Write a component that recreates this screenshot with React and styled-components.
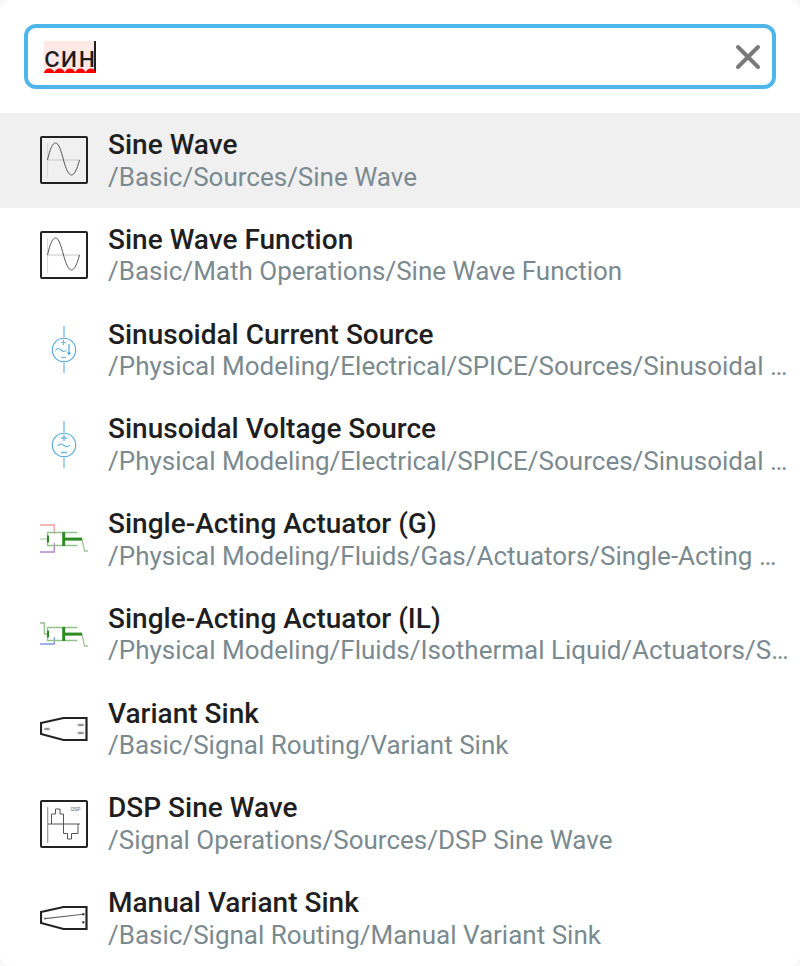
import React from "react";
import styled, { createGlobalStyle } from "styled-components";

const Global = createGlobalStyle`
  html, body { margin: 0; padding: 0; background: #f8f8f8; }
  body { font-family: Roboto, "Liberation Sans", sans-serif; }
`;

const Panel = styled.div`
  width: 800px;
  height: 966px;
  overflow: hidden;
  background: #fff;
  border-radius: 12px;
`;
const SearchArea = styled.div`
  padding: 24px 24px 24px;
`;
const SearchBox = styled.div`
  box-sizing: border-box;
  height: 65px;
  border: 4px solid #4fb6ea;
  border-radius: 12px;
  display: flex;
  align-items: center;
  justify-content: space-between;
  padding: 0 9px 0 16px;
`;
const Query = styled.span`
  position: relative;
  display: block;
  height: 32px;
  width: 50px;
  background: #ffe9e7;
  border-right: 2px solid #222;
  font-size: 30px;
  line-height: 31px;
  letter-spacing: 0.6px;
  color: #1d1d1f;
`;
const Squiggle = styled.svg`
  position: absolute;
  left: 0;
  bottom: 0;
  display: block;
`;
const ClearButton = styled.button`
  border: 0;
  padding: 0;
  background: none;
  display: flex;
  width: 30px;
  height: 30px;
`;
const List = styled.div`
  display: flex;
  flex-direction: column;
`;
const Row = styled.div`
  box-sizing: border-box;
  height: 94.75px;
  flex: none;
  display: flex;
  align-items: center;
  gap: 20px;
  padding: 0 11px 0 40px;
  background: ${(p) => (p.$active ? "#f0f0f0" : "transparent")};
`;
const IconSlot = styled.svg`
  width: 48px;
  height: 48px;
  flex: none;
  display: block;
`;
const Texts = styled.div`
  min-width: 0;
  flex: 1;
  padding-top: 1px;
`;
const Title = styled.div`
  font-size: 28px;
  line-height: 31.5px;
  font-weight: 500;
  color: #1f1f21;
  white-space: nowrap;
`;
const Path = styled.div`
  font-size: 26px;
  line-height: 32px;
  font-weight: 400;
  color: #7b8a8f;
  white-space: nowrap;
  overflow: hidden;
  text-overflow: ellipsis;
`;

const Box = () => (
  <rect x="1" y="1" width="46" height="46" rx="1" fill="none" stroke="#222" strokeWidth="2" />
);

const SinePlot = () => (
  <>
    <path d="M7.5 7V42" stroke="#dcdcdc" strokeWidth="1.2" fill="none" />
    <path d="M7.5 24H40" stroke="#c8c8c8" strokeWidth="1" fill="none" />
    <path
      d="M7.5 24C10 13 12.5 7 15.5 7C19 7 21 15 23.5 24C26 33 28.5 39 31.5 39C34.5 39 37 33 39.5 24"
      stroke="#555"
      strokeWidth="1"
      fill="none"
    />
  </>
);

const SineIcon = () => (
  <IconSlot viewBox="0 0 48 48">
    <Box />
    <SinePlot />
  </IconSlot>
);

const SourceBase = ({ children }) => (
  <IconSlot viewBox="0 0 48 48">
    <path d="M24 0V11.5M24 36.5V47" stroke="#9ccfec" strokeWidth="1.8" fill="none" />
    <circle cx="24" cy="24" r="11.7" fill="none" stroke="#4fa8dc" strokeWidth="1.1" />
    {children}
  </IconSlot>
);

const CurrentIcon = () => (
  <SourceBase>
    <path d="M21 16.5H26M23.5 14V19M21 31.5H26" stroke="#6db8e2" strokeWidth="1.2" fill="none" />
    <path d="M15.5 24.5C17 22 19 22 21 24C23 26 25 26 26.5 24" stroke="#5fb0df" strokeWidth="1.1" fill="none" />
    <path d="M29 18V28" stroke="#3f9fd8" strokeWidth="1.1" fill="none" />
    <path d="M27 26.5H31L29 29.5Z" fill="#3f9fd8" />
  </SourceBase>
);

const VoltageIcon = () => (
  <SourceBase>
    <path d="M21 17H27M24 14V20M21 31.5H27" stroke="#6db8e2" strokeWidth="1.4" fill="none" />
    <path d="M18 25C19.5 22.5 21.5 22.5 24 24.5C26.5 26.5 28.5 26 30 24" stroke="#5fb0df" strokeWidth="1.1" fill="none" />
  </SourceBase>
);

const ActuatorBody = () => (
  <>
    <path d="M37.5 17.5H7.5V30.5H37.5" stroke="#94c28a" strokeWidth="1.3" fill="none" />
    <path d="M42 24L44.5 36H49" stroke="#a2c49b" strokeWidth="1.3" fill="none" />
    <rect x="7" y="20.5" width="2" height="7" fill="#2f8a25" />
    <rect x="22.2" y="17" width="3" height="14" fill="#2f8a25" />
    <rect x="25" y="22.6" width="17" height="3" fill="#2f8a25" />
  </>
);

const GasActuatorIcon = () => (
  <IconSlot viewBox="0 0 48 48">
    <path d="M0 10H14.3V19" stroke="#f3a0a0" strokeWidth="1.3" fill="none" />
    <path d="M0 37H14.3V28" stroke="#b587cb" strokeWidth="1.3" fill="none" />
    <path d="M0 24H7" stroke="#c5dcc0" strokeWidth="1.6" fill="none" />
    <ActuatorBody />
  </IconSlot>
);

const LiquidActuatorIcon = () => (
  <IconSlot viewBox="0 0 48 48">
    <path d="M0 13H4.3V24H7" stroke="#94c28a" strokeWidth="1.3" fill="none" />
    <path d="M0 34H14.3V27" stroke="#8096ea" strokeWidth="1.3" fill="none" />
    <ActuatorBody />
  </IconSlot>
);

const SinkOutline = () => (
  <path d="M1 18L23.5 13H46.5V35H23.5L1 29Z" fill="none" stroke="#222" strokeWidth="2.2" />
);

const SinkIcon = () => (
  <IconSlot viewBox="0 0 48 48">
    <SinkOutline />
    <path d="M4 24H10M37.5 20H44M37.5 28H44" stroke="#b0b0b0" strokeWidth="2.6" fill="none" />
    <path d="M5.5 24H8.5M39 20H42.5M39 28H42.5" stroke="#666" strokeWidth="0.8" fill="none" />
  </IconSlot>
);

const ManualSinkIcon = () => (
  <IconSlot viewBox="0 0 48 48">
    <SinkOutline />
    <path d="M5 24.6L43 20.3" stroke="#666" strokeWidth="1.1" fill="none" />
    <circle cx="5" cy="24.6" r="1" fill="#666" />
    <circle cx="43.3" cy="20.3" r="1.2" fill="#444" />
    <circle cx="43.3" cy="28.3" r="1.2" fill="#444" />
  </IconSlot>
);

const DspIcon = () => (
  <IconSlot viewBox="0 0 48 48">
    <Box />
    <path d="M7.7 7V43" stroke="#999" strokeWidth="1.2" fill="none" />
    <path d="M7.7 24H40" stroke="#555" strokeWidth="1" fill="none" />
    <path
      d="M11.5 24V14H15.5V9H20V14H23.5V24V33.5H27.5V39H31.5V33.5H38V24"
      stroke="#555"
      strokeWidth="1"
      fill="none"
    />
    <text x="31" y="11" fontSize="5" fill="#555" fontFamily="Roboto, sans-serif">DSP</text>
  </IconSlot>
);

const items = [
  { icon: SineIcon, title: "Sine Wave", path: "/Basic/Sources/Sine Wave", active: true },
  { icon: SineIcon, title: "Sine Wave Function", path: "/Basic/Math Operations/Sine Wave Function" },
  { icon: CurrentIcon, title: "Sinusoidal Current Source", path: "/Physical Modeling/Electrical/SPICE/Sources/Sinusoidal Current Source" },
  { icon: VoltageIcon, title: "Sinusoidal Voltage Source", path: "/Physical Modeling/Electrical/SPICE/Sources/Sinusoidal Voltage Source" },
  { icon: GasActuatorIcon, title: "Single-Acting Actuator (G)", path: "/Physical Modeling/Fluids/Gas/Actuators/Single-Acting Actuator (G)" },
  { icon: LiquidActuatorIcon, title: "Single-Acting Actuator (IL)", path: "/Physical Modeling/Fluids/Isothermal Liquid/Actuators/Single-Acting Actuator (IL)" },
  { icon: SinkIcon, title: "Variant Sink", path: "/Basic/Signal Routing/Variant Sink" },
  { icon: DspIcon, title: "DSP Sine Wave", path: "/Signal Operations/Sources/DSP Sine Wave" },
  { icon: ManualSinkIcon, title: "Manual Variant Sink", path: "/Basic/Signal Routing/Manual Variant Sink" },
];

const wave = Array.from({ length: 5 })
  .map((_, i) => `M${i * 10.4} 5a5.2 4.4 0 0 1 10.4 0`)
  .join("");

export default function App() {
  return (
    <>
      <Global />
      <Panel>
        <SearchArea>
          <SearchBox>
            <Query>
              син
              <Squiggle width="52" height="5" viewBox="0 0 52 5">
                <path d={wave} fill="#f00" />
              </Squiggle>
            </Query>
            <ClearButton aria-label="Clear">
              <svg width="30" height="30" viewBox="0 0 30 30">
                <path d="M5 5L25 25M25 5L5 25" stroke="#7a7a7a" strokeWidth="4" strokeLinecap="round" />
              </svg>
            </ClearButton>
          </SearchBox>
        </SearchArea>
        <List>
          {items.map(({ icon: Icon, title, path, active }) => (
            <Row key={title} $active={active}>
              <Icon />
              <Texts>
                <Title>{title}</Title>
                <Path>{path}</Path>
              </Texts>
            </Row>
          ))}
        </List>
      </Panel>
    </>
  );
}
